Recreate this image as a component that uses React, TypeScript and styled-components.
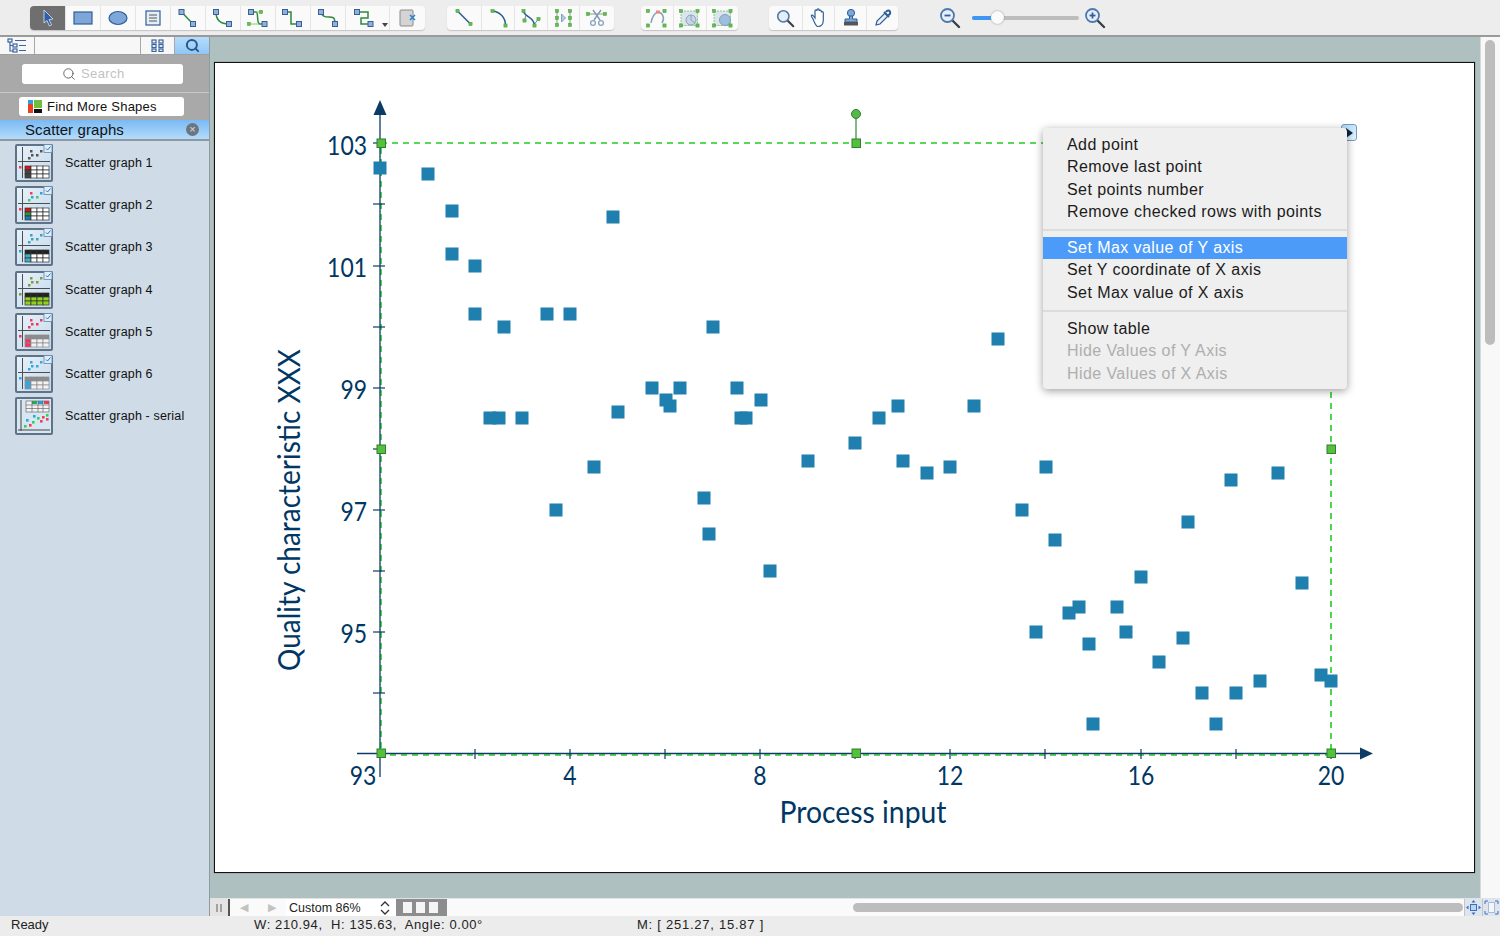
import React from "react";
import styled, { createGlobalStyle } from "styled-components";
import { Search as SearchIcon } from "lucide-react";

const GlobalStyle = createGlobalStyle`
  html, body {
    margin: 0;
    padding: 0;
    overflow: hidden;
  }
  body {
    font-family: "Liberation Sans", Arial, sans-serif;
    color: #111;
  }
`;

const Shell = styled.div`
  width: 1500px;
  height: 936px;
  display: flex;
  flex-direction: column;
  overflow: hidden;
  background: #ececec;
`;

const Toolbar = styled.div`
  height: 29px;
  flex: none;
  display: flex;
  align-items: flex-start;
  padding: 6px 0 0 30px;
  background: #ededed;
  border-bottom: 2px solid #9a9a9a;
`;

const ToolGroup = styled.div<{ $gap?: number }>`
  display: flex;
  height: 24px;
  margin-right: ${(p) => p.$gap ?? 0}px;
  background: #fafafa;
  border-radius: 4px;
  box-shadow: 0 1px 1px #c4c4c4;
`;

const ToolButton = styled.div<{ $w?: number; $active?: boolean; $pad?: number }>`
  position: relative;
  width: ${(p) => p.$w ?? 35}px;
  height: 24px;
  display: flex;
  align-items: center;
  justify-content: center;
  padding-right: ${(p) => p.$pad ?? 0}px;
  border-right: 1px solid #e4e4e4;
  box-sizing: border-box;
  background: ${(p) => (p.$active ? "#6f6f6f" : "transparent")};
  border-radius: ${(p) => (p.$active ? "4px 0 0 4px" : "0")};
  &:last-child {
    border-right: none;
  }
`;

const Caret = styled.span`
  position: absolute;
  right: 1px;
  bottom: 3px;
  border-left: 3px solid transparent;
  border-right: 3px solid transparent;
  border-top: 4px solid #444;
`;

const SliderWrap = styled.div`
  display: flex;
  align-items: center;
  height: 24px;
  margin-left: 41px;
`;

const SliderTrack = styled.div`
  position: relative;
  width: 107px;
  height: 4px;
  margin: 0 5px 0 11px;
  border-radius: 2px;
  background: #bdbdbd;
`;

const SliderFill = styled.div`
  width: 25px;
  height: 4px;
  border-radius: 2px;
  background: #3f95f2;
`;

const SliderKnob = styled.div`
  position: absolute;
  left: 19px;
  top: -5px;
  width: 13px;
  height: 13px;
  border-radius: 50%;
  background: #fbfbfb;
  box-shadow: 0 0 2px #8a8a8a;
`;

const Body = styled.div`
  flex: 1;
  display: flex;
  min-height: 0;
`;

const Sidebar = styled.aside`
  width: 210px;
  flex: none;
  display: flex;
  flex-direction: column;
  background: #cfdbe6;
  border-right: 1px solid #8e9a9e;
  box-sizing: border-box;
`;

const TabRow = styled.div`
  height: 17px;
  flex: none;
  display: flex;
  background: #f4f4f4;
  border-bottom: 1px solid #a0a0a0;
`;

const Tab = styled.div<{ $w: number; $active?: boolean; $grow?: boolean }>`
  width: ${(p) => p.$w}px;
  flex: ${(p) => (p.$grow ? 1 : "none")};
  display: flex;
  align-items: center;
  justify-content: center;
  box-sizing: border-box;
  border-right: 1px solid #a8a8a8;
  background: ${(p) => (p.$active ? "linear-gradient(#b5dcfb, #8fc7f5)" : "#f7f7f7")};
  &:last-child {
    border-right: none;
  }
`;

const SearchRow = styled.div`
  height: 37px;
  flex: none;
  display: flex;
  align-items: center;
  padding-left: 22px;
  background: #a9a9a9;
  border-bottom: 1px solid #c9c9c9;
`;

const SearchBox = styled.div`
  width: 161px;
  height: 20px;
  display: flex;
  align-items: center;
  gap: 5px;
  padding-left: 40px;
  box-sizing: border-box;
  border-radius: 3px;
  background: #fff;
  color: #c2c2c2;
  font-size: 13px;
  letter-spacing: 0.4px;
`;

const FindRow = styled.div`
  height: 27px;
  flex: none;
  display: flex;
  align-items: center;
  padding-left: 19px;
  background: #a9a9a9;
`;

const FindButton = styled.div`
  width: 165px;
  height: 19px;
  display: flex;
  align-items: center;
  gap: 5px;
  padding-left: 9px;
  box-sizing: border-box;
  border-radius: 3px;
  background: #fff;
  font-size: 13px;
  letter-spacing: 0.22px;
`;

const SectionHeader = styled.div`
  height: 21px;
  flex: none;
  display: flex;
  align-items: center;
  justify-content: space-between;
  padding: 0 10px 1px 25px;
  box-sizing: border-box;
  background: linear-gradient(#79b9f4, #b4dcfb);
  border-bottom: 2px solid #8d9aa3;
  font-size: 15px;
  letter-spacing: 0.1px;
`;

const CloseDot = styled.span`
  width: 13px;
  height: 13px;
  border-radius: 50%;
  background: #6d7680;
  color: #d5dde4;
  font-size: 11px;
  line-height: 13px;
  text-align: center;
`;

const ShapeList = styled.div`
  display: flex;
  flex-direction: column;
  gap: 4.2px;
  padding: 4px 0 0 15px;
`;

const ShapeRow = styled.div`
  height: 38px;
  display: flex;
  align-items: center;
  gap: 12px;
  font-size: 12.5px;
  letter-spacing: 0.15px;
  padding-bottom: 2px;
  box-sizing: border-box;
`;

const Workspace = styled.div`
  flex: 1;
  min-width: 0;
  display: flex;
  flex-direction: column;
`;

const CanvasRow = styled.div`
  flex: 1;
  min-height: 0;
  display: flex;
`;

const PageArea = styled.div`
  flex: 1;
  padding: 25px 4px 0 4px;
  background: #afc0c0;
`;

const Page = styled.div`
  position: relative;
  width: 1261px;
  height: 811px;
  box-sizing: border-box;
  border: 1px solid #111;
  background: #fff;
  box-shadow: 0 0 1px #555;
`;

const ChartSvg = styled.svg`
  display: block;
  width: 1259px;
  height: 809px;
  font-family: Lato, "Open Sans", sans-serif;
`;

const VScroll = styled.div`
  width: 20px;
  flex: none;
  background: #f8f8f8;
  border-left: 1px solid #d8d8d8;
  box-sizing: border-box;
  padding: 3px 5px 0 4px;
`;

const VThumb = styled.div`
  height: 305px;
  border-radius: 5px;
  background: #bdbdbd;
`;

const ContextMenu = styled.div`
  position: absolute;
  left: 828px;
  top: 65px;
  width: 304px;
  height: 261px;
  box-sizing: border-box;
  padding: 6px 0 0;
  background: #efefef;
  border-radius: 4px;
  box-shadow: 0 2px 9px rgba(0, 0, 0, 0.38);
  font-size: 16px;
  letter-spacing: 0.42px;
`;

const MenuItem = styled.div<{ $selected?: boolean; $disabled?: boolean }>`
  height: 22.3px;
  line-height: 22.3px;
  padding-left: 24px;
  white-space: nowrap;
  background: ${(p) => (p.$selected ? "#4c9bf8" : "transparent")};
  color: ${(p) => (p.$selected ? "#fff" : p.$disabled ? "#aeaeae" : "#1b1b1b")};
`;

const MenuDivider = styled.div`
  height: 2px;
  margin: 6px 0 6px;
  background: #dcdcdc;
`;

const ActionButton = styled.div`
  position: absolute;
  left: 1126px;
  top: 61px;
  width: 16px;
  height: 17px;
  box-sizing: border-box;
  border: 1px solid #7d96c4;
  border-radius: 3px;
  background: linear-gradient(135deg, #a7dcf8, #e8f5fd);
  display: flex;
  align-items: center;
  justify-content: center;
`;

const BottomBar = styled.div`
  height: 18px;
  flex: none;
  display: flex;
  align-items: stretch;
  background: #fafafa;
  border-top: 1px solid #e2e2e2;
  box-sizing: border-box;
  font-size: 12.5px;
`;

const PauseCell = styled.div`
  width: 20px;
  flex: none;
  display: flex;
  align-items: center;
  justify-content: center;
  gap: 2px;
  background: #e4e4e4;
  border-right: 2px solid #555;
  box-sizing: border-box;
`;

const PauseBar = styled.span`
  width: 2px;
  height: 8px;
  background: #a2a2a2;
`;

const NavCell = styled.div`
  width: 28px;
  flex: none;
  display: flex;
  align-items: center;
  justify-content: center;
  color: #c2c2c2;
  font-size: 11px;
`;

const ZoomSelect = styled.div`
  width: 110px;
  flex: none;
  display: flex;
  align-items: center;
  justify-content: space-between;
  padding: 0 6px 0 3px;
  box-sizing: border-box;
  background: #fff;
  color: #222;
`;

const PageTabs = styled.div`
  width: 51px;
  flex: none;
  display: flex;
  align-items: center;
  gap: 4px;
  padding-left: 7px;
  box-sizing: border-box;
  background: #8d8d8d;
`;

const PageTab = styled.span`
  width: 9px;
  height: 11px;
  background: #f5f5f5;
`;

const HScroll = styled.div`
  flex: 1;
  display: flex;
  align-items: center;
  padding-left: 406px;
  padding-right: 1px;
`;

const HThumb = styled.div`
  flex: 1;
  height: 9px;
  border-radius: 5px;
  background: #bdbdbd;
`;

const FitCell = styled.div`
  width: 18px;
  flex: none;
  display: flex;
  align-items: center;
  justify-content: center;
  background: #dfe5ee;
  border-left: 1px solid #c4c4c4;
  box-sizing: border-box;
`;

const StatusBar = styled.footer`
  height: 20px;
  flex: none;
  display: flex;
  align-items: center;
  padding-bottom: 4px;
  box-sizing: border-box;
  background: #ececec;
  font-size: 13px;
  color: #222;
`;

const StatusCell = styled.span<{ $w: number; $pad?: number; $tracking?: number }>`
  width: ${(p) => p.$w}px;
  padding-left: ${(p) => p.$pad ?? 0}px;
  letter-spacing: ${(p) => p.$tracking ?? 0}px;
  box-sizing: border-box;
  white-space: pre;
`;

/* ---- small drawings ---- */

const Svg: React.FC<{ w?: number; h?: number; children: React.ReactNode }> = ({ w = 24, h = 20, children }) => (
  <svg width={w} height={h} viewBox={`0 0 ${w} ${h}`} fill="none">
    {children}
  </svg>
);

const Node: React.FC<{ x: number; y: number }> = ({ x, y }) => (
  <rect x={x - 2.5} y={y - 2.5} width={5} height={5} fill="#8fb2dc" stroke="#3a5f96" strokeWidth={1} />
);

const Dot: React.FC<{ x: number; y: number }> = ({ x, y }) => (
  <rect x={x - 1.6} y={y - 1.6} width={3.2} height={3.2} fill="#5fc04c" stroke="#3d8a35" strokeWidth={0.4} />
);

const Connector: React.FC<{
  d: string;
  a: [number, number];
  b: [number, number];
  children?: React.ReactNode;
}> = ({ d, a, b, children }) => (
  <Svg>
    <path d={d} stroke="#2e8b3a" strokeWidth={1.5} />
    {children}
    <Node x={a[0]} y={a[1]} />
    <Node x={b[0]} y={b[1]} />
  </Svg>
);

const GreenLine: React.FC<{ d: string; dots: [number, number][]; stroke?: string; children?: React.ReactNode }> = ({
  d,
  dots,
  stroke = "#2c5d8f",
  children,
}) => (
  <Svg>
    <path d={d} stroke={stroke} strokeWidth={1.5} />
    {children}
    {dots.map(([x, y]) => (
      <Dot key={`${x}-${y}`} x={x} y={y} />
    ))}
  </Svg>
);

const Magnifier: React.FC<{ sign?: "+" | "-"; size?: number }> = ({ sign, size = 22 }) => (
  <svg width={size} height={size} viewBox="0 0 22 22" fill="none">
    <path d="M13 13l7 7" stroke="#3a3f46" strokeWidth={2.4} strokeLinecap="round" />
    <circle cx={8.5} cy={8.5} r={6.5} fill="#e6eef8" stroke="#4d78ad" strokeWidth={1.8} />
    {sign && <path d="M5.5 8.5h6" stroke="#2f5f9e" strokeWidth={1.8} />}
    {sign === "+" && <path d="M8.5 5.5v6" stroke="#2f5f9e" strokeWidth={1.8} />}
  </svg>
);

const ResizeBox: React.FC<{ children?: React.ReactNode }> = ({ children }) => (
  <Svg>
    <rect x={3} y={3} width={16.5} height={14.5} fill="#dbe6ea" stroke="#96c096" strokeDasharray="2 1" />
    {children}
    {[[3, 3], [19.5, 3], [3, 17.5], [19.5, 17.5]].map(([x, y]) => (
      <Dot key={`${x}-${y}`} x={x} y={y} />
    ))}
  </Svg>
);

type Palette = {
  dots: string[];
  left: string;
  header?: string;
  firstCol: string[];
  body: string;
  line: string;
};

const dotSpots = [
  [15, 6],
  [25, 6],
  [16, 10],
  [21, 10],
  [13, 13],
];

const Thumb: React.FC<{ p: Palette }> = ({ p }) => (
  <svg width={38} height={38} viewBox="0 0 38 38">
    <defs>
      <linearGradient id="thumbBg" x1="0" y1="0" x2="1" y2="1">
        <stop offset="0" stopColor="#e9f2f9" />
        <stop offset="1" stopColor="#c3d8ea" />
      </linearGradient>
    </defs>
    <rect x={1} y={1} width={36} height={36} rx={1} fill="url(#thumbBg)" stroke="#5f7388" strokeWidth={2} />
    <path d="M7.500 3V34M3 17.500H35" stroke="#4a4f55" strokeWidth={1} />
    {dotSpots.map(([x, y], i) => (
      <rect key={`${x}-${y}`} x={x} y={y} width={2.5} height={2.5} fill={p.dots[i]} />
    ))}
    <rect x={4} y={22} width={2.5} height={2.5} fill={p.left} />
    {[0, 1, 2].map((r) =>
      [0, 1, 2, 3].map((c) => {
        const head = r === 0 && p.header;
        const fill = head ? (p.header as string) : c === 0 ? p.firstCol[r] : p.body;
        return (
          <rect
            key={`${r}-${c}`}
            x={10 + c * 6}
            y={22 + r * 4}
            width={6}
            height={4}
            fill={fill}
            stroke={p.line}
            strokeWidth={0.7}
          />
        );
      }),
    )}
    <rect x={29} y={0.500} width={8} height={8} fill="#dcecf8" stroke="#5f86ad" strokeWidth={0.8} />
    <path d="M31 4.500l1.500 1.500L35.500 2.500" stroke="#3a6fa8" strokeWidth={1} fill="none" />
  </svg>
);

const SerialThumb: React.FC = () => (
  <svg width={38} height={38} viewBox="0 0 38 38">
    <rect x={1} y={1} width={36} height={36} rx={1} fill="#d8e6f2" stroke="#5f7388" strokeWidth={2} />
    <path d="M6 3v31M3 33h32" stroke="#444" strokeWidth={1} />
    <rect x={11} y={4} width={23} height={11} fill="#f2f2f2" stroke="#555" strokeWidth={0.6} />
    <rect x={17} y={4} width={5} height={3} fill="#27a95a" />
    <rect x={23} y={4} width={5} height={3} fill="#2a9bd4" />
    <rect x={29} y={4} width={5} height={3} fill="#e0405a" />
    <path d="M17 4v11M23 4v11M28 4v11M11 8h23M11 11.500h23" stroke="#555" strokeWidth={0.6} />
    {[[9, 28, "#2fcf66"], [14, 27, "#f0405a"], [17, 24, "#2fcf66"], [22, 20, "#2fcf66"], [27, 19, "#f0405a"], [31, 17, "#2fcf66"], [11, 22, "#2aa6e0"], [18, 18, "#2aa6e0"], [25, 23, "#f0405a"], [31, 21, "#f0405a"]].map(
      ([x, y, c]) => (
        <rect key={`${x}-${y}`} x={x as number} y={y as number} width={2.6} height={2.6} fill={c as string} />
      ),
    )}
  </svg>
);

/* ---- data ---- */

const same = (c: string) => [c, c, c, c, c];

const shapes: { name: string; palette?: Palette }[] = [
  {
    name: "Scatter graph 1",
    palette: { dots: same("#555"), left: "#f0405a", firstCol: ["#d4161f", "#444", "#444"], body: "#fff", line: "#333" },
  },
  {
    name: "Scatter graph 2",
    palette: {
      dots: ["#f0405a", "#2aa6d8", "#2aa6d8", "#4bc76a", "#4bc76a"],
      left: "#f0405a",
      firstCol: ["#d4161f", "#1f9a3e", "#1f78b8"],
      body: "#fff",
      line: "#333",
    },
  },
  {
    name: "Scatter graph 3",
    palette: { dots: same("#3aa6bc"), left: "#33a8bc", header: "#222", firstCol: ["", "#39b3c9", "#39b3c9"], body: "#fff", line: "#333" },
  },
  {
    name: "Scatter graph 4",
    palette: { dots: same("#7f9a45"), left: "#7f9a45", header: "#222", firstCol: ["", "#8fd31f", "#8fd31f"], body: "#8fd31f", line: "#333" },
  },
  {
    name: "Scatter graph 5",
    palette: { dots: same("#f0365f"), left: "#f0365f", header: "#8c8c8c", firstCol: ["", "#f0365f", "#f0365f"], body: "#f2f2f2", line: "#8c8c8c" },
  },
  {
    name: "Scatter graph 6",
    palette: { dots: same("#2fa8e6"), left: "#2fa8e6", header: "#8c8c8c", firstCol: ["", "#2fa8e6", "#2fa8e6"], body: "#f2f2f2", line: "#8c8c8c" },
  },
  { name: "Scatter graph - serial" },
];

const points: [number, number][] = [
  [380, 168], [428, 174], [452, 211], [452, 254], [475, 266], [475, 314], [504, 327], [490, 418],
  [499, 418], [522, 418], [547, 314], [570, 314], [613, 217], [618, 412], [594, 467], [556, 510],
  [652, 388], [666, 400], [670, 406], [680, 388], [713, 327], [737, 388], [741, 418], [746, 418],
  [761, 400], [704, 498], [709, 534], [770, 571], [808, 461], [855, 443], [879, 418], [898, 406],
  [903, 461], [927, 473], [950, 467], [974, 406], [998, 339], [1022, 510], [1046, 467], [1055, 540],
  [1036, 632], [1069, 613], [1079, 607], [1089, 644], [1093, 724], [1117, 607], [1126, 632], [1141, 577],
  [1159, 662], [1183, 638], [1188, 522], [1202, 693], [1216, 724], [1231, 480], [1236, 693], [1260, 681],
  [1278, 473], [1302, 583], [1321, 675], [1331, 681],
];

const yTicks = [143, 204, 266, 327, 388, 449, 510, 571, 632, 693];
const xTicks = [475, 570, 665, 760, 855, 950, 1045, 1141, 1236, 1331];
const yLabels: [string, number][] = [["103", 155], ["101", 277], ["99", 399], ["97", 521], ["95", 643]];
const xLabels: [string, number][] = [["93", 363], ["4", 570], ["8", 760], ["12", 950], ["16", 1141], ["20", 1331]];
const handles: [number, number][] = [
  [381, 143], [856, 143], [381, 449], [1331, 449], [381, 753], [856, 753], [1331, 753],
];

const ink = "#0c3c66";
const textInk = "#003764";

const Chart: React.FC = () => (
  <ChartSvg viewBox="215 63 1259 809">
    <path d="M381 143H1331V755H381Z" fill="none" stroke="#22cc22" strokeWidth={1.6} strokeDasharray="6 5" />
    <path d="M380 112V777M357 753.500H1362" stroke={ink} strokeWidth={1.3} />
    <path d="M380 100l-6.500 15h13zM1373 753.500l-13-6v12z" fill={ink} />
    {yTicks.map((y) => (
      <path key={y} d={`M373 ${y}h12`} stroke={ink} strokeWidth={1.2} />
    ))}
    {xTicks.map((x) => (
      <path key={x} d={`M${x} 749v10`} stroke={ink} strokeWidth={1.2} />
    ))}
    {points.map(([x, y]) => (
      <rect key={`${x}-${y}`} x={x - 6.5} y={y - 6.5} width={13} height={13} fill="#1f7fae" />
    ))}
    {yLabels.map(([t, y]) => (
      <text key={t} x={367} y={y} textAnchor="end" fontSize={27.5} fill={textInk} textLength={t.length * 13.3} lengthAdjust="spacingAndGlyphs">
        {t}
      </text>
    ))}
    {xLabels.map(([t, x]) => (
      <text key={t} x={x} y={785} textAnchor="middle" fontSize={27.5} fill={textInk} textLength={t.length * 13.3} lengthAdjust="spacingAndGlyphs">
        {t}
      </text>
    ))}
    <text x={863} y={823} textAnchor="middle" fontSize={31} fill={textInk} textLength={167} lengthAdjust="spacingAndGlyphs">
      Process input
    </text>
    <text
      transform="translate(300 510) rotate(-90)"
      textAnchor="middle"
      fontSize={31}
      fill={textInk}
      textLength={322}
      lengthAdjust="spacingAndGlyphs"
    >
      Quality characteristic XXX
    </text>
    <path d="M856 114V143" stroke="#2c8a3a" strokeWidth={1.2} />
    <circle cx={856} cy={114} r={4.5} fill="#55b848" stroke="#2f7f33" />
    {handles.map(([x, y]) => (
      <rect key={`${x}-${y}`} x={x - 4} y={y - 4} width={8.5} height={8.5} fill="#55c03a" stroke="#2f7f33" />
    ))}
  </ChartSvg>
);

const App: React.FC = () => (
  <Shell>
    <GlobalStyle />
    <Toolbar>
      <ToolGroup $gap={22}>
        <ToolButton $w={36} $active>
          <svg width={14} height={18} viewBox="0 0 14 18">
            <path d="M3 1l9 9-4 .6 2.600 5.400-2.200 1-2.400-5.400L3 14z" fill="#2f5fa8" stroke="#dce6f4" strokeWidth={0.8} />
          </svg>
        </ToolButton>
        <ToolButton>
          <Svg>
            <rect x={3} y={4} width={18} height={12} fill="#7ea6d8" stroke="#2f5f96" strokeWidth={1.2} />
          </Svg>
        </ToolButton>
        <ToolButton>
          <Svg>
            <ellipse cx={12} cy={10} rx={9} ry={6.500} fill="#7ea6d8" stroke="#2f5f96" strokeWidth={1.2} />
          </Svg>
        </ToolButton>
        <ToolButton>
          <Svg>
            <rect x={5} y={3} width={14} height={14} fill="#e7edf5" stroke="#2f5f96" strokeWidth={1.2} />
            <path d="M8 7h8M8 10h8M8 13h8" stroke="#555" />
          </Svg>
        </ToolButton>
        <ToolButton>
          <Connector d="M5.500 4L17 16" a={[5.5, 4]} b={[17, 16]} />
        </ToolButton>
        <ToolButton>
          <Connector d="M5 4C5 11 9 16 18 16" a={[5, 4]} b={[18, 16]} />
        </ToolButton>
        <ToolButton>
          <Connector d="M5 4H10C13 4 10 16 14 16H18" a={[5, 4]} b={[18.5, 16]}>
            <Dot x={15} y={4} />
            <Dot x={3} y={16} />
            <path d="M15 4H9M3 16H13" stroke="#6fbf50" strokeWidth={0.8} />
          </Connector>
        </ToolButton>
        <ToolButton>
          <Connector d="M4 4H10V16H18" a={[4, 4]} b={[18, 16]} />
        </ToolButton>
        <ToolButton>
          <Connector d="M5 4C6 9 10 9 13 9C17 9 19 9 19 16" a={[5, 4]} b={[19, 16]} />
        </ToolButton>
        <ToolButton $w={44} $pad={9}>
          <Connector d="M6 4H17V10H10V16H19" a={[6, 4]} b={[19.5, 16]} />
          <Caret />
        </ToolButton>
        <ToolButton>
          <Svg>
            <rect x={4} y={2} width={13} height={16} rx={1} fill="#d4d4d4" stroke="#8a8a8a" />
            <path d="M14 7l5 5M19 7l-5 5" stroke="#2f7fd0" strokeWidth={1.6} />
          </Svg>
        </ToolButton>
      </ToolGroup>
      <ToolGroup $gap={27}>
        <ToolButton>
          <GreenLine d="M5.500 3L18.500 16" dots={[[5.5, 3], [18.5, 16]]} />
        </ToolButton>
        <ToolButton $w={33}>
          <GreenLine d="M6.500 3C14 4 19.500 9 19.500 17.500" dots={[[6.5, 3], [19.5, 17.5]]} />
        </ToolButton>
        <ToolButton $w={33}>
          <GreenLine d="M4.500 3C6 10 15 8 15.500 17.500" dots={[[4.5, 3], [15.5, 17.5], [5.5, 12.5], [19.5, 11]]}>
            <path d="M5.500 12.500L7 7M19.500 11L15.500 16" stroke="#2c5d8f" strokeWidth={0.7} />
          </GreenLine>
        </ToolButton>
        <ToolButton $w={32}>
          <GreenLine
            d="M5 3V17M18 3V17"
            stroke="#9fc4a8"
            dots={[[5, 3], [5, 10], [5, 17], [18, 3], [18, 10], [18, 17]]}
          >
            <path d="M9.500 6l4 4-4 4z" fill="#b4cce0" stroke="#7fa0c0" />
          </GreenLine>
        </ToolButton>
        <ToolButton $w={34}>
          <GreenLine d="M3 6H20" stroke="#a8c0a8" dots={[[3, 6], [20, 6]]}>
            <path d="M8 2L15 12M16 2L9 12" stroke="#8298b4" strokeWidth={1.4} />
            <circle cx={8} cy={15} r={2.400} fill="none" stroke="#8aa2c0" strokeWidth={1.3} />
            <circle cx={16} cy={15} r={2.400} fill="none" stroke="#8aa2c0" strokeWidth={1.3} />
          </GreenLine>
        </ToolButton>
      </ToolGroup>
      <ToolGroup $gap={31}>
        <ToolButton $w={33}>
          <GreenLine
            d="M6 15C7 9 10 5 13 4C18 5 20 10 17 15"
            stroke="#8aa2ba"
            dots={[[3, 3], [19.5, 3], [3, 17.5], [19.5, 17.5]]}
          >
            <rect x={11} y={2.500} width={4} height={3} fill="#e58a7e" />
          </GreenLine>
        </ToolButton>
        <ToolButton $w={33}>
          <ResizeBox>
            <circle cx={13} cy={12} r={5} fill="#c6d6e6" stroke="#8aa2ba" />
            <path d="M13 7v5l4 3" stroke="#8aa2ba" />
          </ResizeBox>
        </ToolButton>
        <ToolButton $w={31}>
          <ResizeBox>
            <circle cx={14} cy={12} r={5.500} fill="#9ebfdc" stroke="#7d9fc0" />
          </ResizeBox>
        </ToolButton>
      </ToolGroup>
      <ToolGroup>
        <ToolButton $w={34}>
          <Magnifier size={19} />
        </ToolButton>
        <ToolButton $w={32}>
          <svg width={20} height={22} viewBox="0 0 20 22" fill="#fff" stroke="#2f5f96" strokeWidth={1.2}>
            <path d="M4 12L2.500 9.500C2 8 3.500 7.500 4.500 9L6 11V4c0-1.500 2-1.500 2 0V3c0-1.500 2.200-1.500 2.200 0v1c0-1.300 2.100-1.300 2.100.2v1.300c0-1.200 2-1.200 2 .3V13c0 4-2 6.500-5.500 6.500C7 19.500 6 17 4 12z" />
          </svg>
        </ToolButton>
        <ToolButton $w={32}>
          <svg width={20} height={20} viewBox="0 0 20 20">
            <circle cx={10} cy={5} r={3.600} fill="#7ea6d8" stroke="#2f5f96" />
            <path d="M8.500 8v3H4v3h12v-3h-4.500V8z" fill="#7ea6d8" stroke="#2f5f96" />
            <rect x={3} y={14} width={14} height={3.500} fill="#555" />
          </svg>
        </ToolButton>
        <ToolButton $w={31}>
          <svg width={20} height={20} viewBox="0 0 20 20" fill="none">
            <path d="M3 17l1-4 8-8 3 3-8 8z" fill="#e8f0fa" stroke="#2f5f96" strokeWidth={1.2} />
            <path d="M11 4l5 5M13 4c1-2 4-2 4 0 1 2-1 3-2 3" stroke="#2f5f96" strokeWidth={2} />
          </svg>
        </ToolButton>
      </ToolGroup>
      <SliderWrap>
        <Magnifier sign="-" />
        <SliderTrack>
          <SliderFill />
          <SliderKnob />
        </SliderTrack>
        <Magnifier sign="+" />
      </SliderWrap>
    </Toolbar>
    <Body>
      <Sidebar>
        <TabRow>
          <Tab $w={35}>
            <svg width={20} height={15} viewBox="0 0 20 15" fill="none" stroke="#3a63a0" strokeWidth={1.2}>
              <rect x={1} y={1} width={4} height={3} />
              <rect x={6} y={6} width={4} height={3} />
              <rect x={6} y={11} width={4} height={3} />
              <path d="M3 4v9h3M3 7.500h3M8 2.500h11M12 7.500h7M12 12.500h7" />
            </svg>
          </Tab>
          <Tab $w={106} />
          <Tab $w={34}>
            <svg width={13} height={13} viewBox="0 0 13 13" fill="none" stroke="#3a63a0" strokeWidth={1.2}>
              <rect x={1} y={1} width={4} height={3} />
              <rect x={8} y={1} width={4} height={3} />
              <rect x={1} y={5.500} width={4} height={3} />
              <rect x={8} y={5.500} width={4} height={3} />
              <rect x={1} y={10} width={4} height={2.500} />
              <rect x={8} y={10} width={4} height={2.500} />
            </svg>
          </Tab>
          <Tab $w={33} $grow $active>
            <SearchIcon size={15} color="#27568f" strokeWidth={3.2} />
          </Tab>
        </TabRow>
        <SearchRow>
          <SearchBox>
            <SearchIcon size={14} color="#555" strokeWidth={1.5} />
            Search
          </SearchBox>
        </SearchRow>
        <FindRow>
          <FindButton>
            <svg width={14} height={13} viewBox="0 0 14 13">
              <rect x={0} y={0} width={5} height={4} fill="#2f9be0" />
              <rect x={0} y={4} width={5} height={9} fill="#e8401f" />
              <rect x={6} y={0} width={8} height={8} fill="#6fbe3c" />
              <rect x={6} y={9} width={8} height={4} fill="#111" />
            </svg>
            Find More Shapes
          </FindButton>
        </FindRow>
        <SectionHeader>
          Scatter graphs
          <CloseDot>×</CloseDot>
        </SectionHeader>
        <ShapeList>
          {shapes.map((s) => (
            <ShapeRow key={s.name}>
              {s.palette ? <Thumb p={s.palette} /> : <SerialThumb />}
              {s.name}
            </ShapeRow>
          ))}
        </ShapeList>
      </Sidebar>
      <Workspace>
        <CanvasRow>
          <PageArea>
            <Page>
              <Chart />
              <ActionButton>
                <svg width={8} height={10} viewBox="0 0 8 10">
                  <path d="M1 0l7 5-7 5z" fill="#0c2340" />
                </svg>
              </ActionButton>
              <ContextMenu>
                <MenuItem>Add point</MenuItem>
                <MenuItem>Remove last point</MenuItem>
                <MenuItem>Set points number</MenuItem>
                <MenuItem>Remove checked rows with points</MenuItem>
                <MenuDivider />
                <MenuItem $selected>Set Max value of Y axis</MenuItem>
                <MenuItem>Set Y coordinate of X axis</MenuItem>
                <MenuItem>Set Max value of X axis</MenuItem>
                <MenuDivider />
                <MenuItem>Show table</MenuItem>
                <MenuItem $disabled>Hide Values of Y Axis</MenuItem>
                <MenuItem $disabled>Hide Values of X Axis</MenuItem>
              </ContextMenu>
            </Page>
          </PageArea>
          <VScroll>
            <VThumb />
          </VScroll>
        </CanvasRow>
        <BottomBar>
          <PauseCell>
            <PauseBar />
            <PauseBar />
          </PauseCell>
          <NavCell>◀</NavCell>
          <NavCell>▶</NavCell>
          <ZoomSelect>
            Custom 86%
            <svg width={10} height={14} viewBox="0 0 10 14" fill="none" stroke="#333" strokeWidth={1.3}>
              <path d="M1 5l4-4 4 4M1 9l4 4 4-4" />
            </svg>
          </ZoomSelect>
          <PageTabs>
            <PageTab />
            <PageTab />
            <PageTab />
          </PageTabs>
          <HScroll>
            <HThumb />
          </HScroll>
          <FitCell>
            <svg width={15} height={15} viewBox="0 0 15 15" fill="#3a6fc0">
              <rect x={4.500} y={4.500} width={6} height={6} fill="#bcd4f0" stroke="#3a6fc0" />
              <path d="M7.500 0l2 2.500h-4zM7.500 15l2-2.500h-4zM0 7.500l2.500-2v4zM15 7.500l-2.500-2v4z" />
            </svg>
          </FitCell>
          <FitCell>
            <svg width={15} height={15} viewBox="0 0 15 15" fill="none" stroke="#3a6fc0">
              <rect x={4.500} y={2.500} width={6} height={10} fill="#f2f6fb" stroke="#a8bcd6" />
              <path d="M1 4V1h3M11 1h3v3M1 11v3h3M11 14h3v-3" />
            </svg>
          </FitCell>
        </BottomBar>
      </Workspace>
    </Body>
    <StatusBar>
      <StatusCell $w={254} $pad={11}>Ready</StatusCell>
      <StatusCell $w={383} $tracking={0.6}>W: 210.94,  H: 135.63,  Angle: 0.00°</StatusCell>
      <StatusCell $w={300} $tracking={0.75}>M: [ 251.27, 15.87 ]</StatusCell>
    </StatusBar>
  </Shell>
);

export default App;
